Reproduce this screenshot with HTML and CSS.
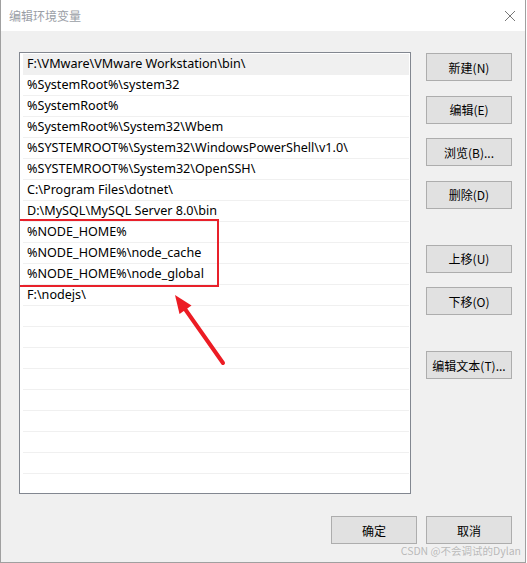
FILE: index.html
```html
<!DOCTYPE html>
<html lang="zh-CN">
<head>
<meta charset="utf-8">
<title>编辑环境变量</title>
<link rel="stylesheet" href="styles.css">
</head>
<body>
<div class="window">
  <div class="titlebar">
    <span class="title">编辑环境变量</span>
    <svg class="close" width="12" height="12" viewBox="0 0 12 12"><path d="M1 1 L11 11 M11 1 L1 11" stroke="#777" stroke-width="1" fill="none"/></svg>
  </div>
  <div class="content">
    <div class="main">
      <div class="listbox">
        <div class="row selected">F:\VMware\VMware Workstation\bin\</div>
        <div class="row">%SystemRoot%\system32</div>
        <div class="row">%SystemRoot%</div>
        <div class="row">%SystemRoot%\System32\Wbem</div>
        <div class="row">%SYSTEMROOT%\System32\WindowsPowerShell\v1.0\</div>
        <div class="row">%SYSTEMROOT%\System32\OpenSSH\</div>
        <div class="row">C:\Program Files\dotnet\</div>
        <div class="row">D:\MySQL\MySQL Server 8.0\bin</div>
        <div class="row">%NODE_HOME%</div>
        <div class="row">%NODE_HOME%\node_cache</div>
        <div class="row">%NODE_HOME%\node_global</div>
        <div class="row">F:\nodejs\</div>
        <div class="row"></div>
        <div class="row"></div>
        <div class="row"></div>
        <div class="row"></div>
        <div class="row"></div>
        <div class="row"></div>
        <div class="row"></div>
        <div class="row"></div>
        <div class="row"></div>
        <div class="highlight"></div>
      </div>
      <div class="side">
        <button class="btn">新建(N)</button>
        <button class="btn">编辑(E)</button>
        <button class="btn">浏览(B)...</button>
        <button class="btn">删除(D)</button>
        <button class="btn far">上移(U)</button>
        <button class="btn">下移(O)</button>
        <button class="btn far">编辑文本(T)...</button>
      </div>
    </div>
    <div class="footer">
      <button class="btn">确定</button>
      <button class="btn">取消</button>
    </div>
  </div>
  <svg class="arrow" width="60" height="80" viewBox="0 0 60 80">
    <line x1="53" y1="73" x2="15" y2="19" stroke="#ec1c24" stroke-width="4" stroke-linecap="round"/>
    <polygon points="5,5 21.5,15.5 9.5,24" fill="#ec1c24"/>
  </svg>
  <div class="watermark">CSDN @不会调试的Dylan</div>
</div>
</body>
</html>
```
FILE: styles.css
```css
* { box-sizing: border-box; }
html, body { margin: 0; padding: 0; background: #ffffff; }
body {
  font-family: "Noto Sans", "Noto Sans CJK SC", sans-serif;
  font-size: 12px;
  color: #000;
}
.window {
  position: relative;
  width: 526px;
  height: 563px;
  background: #f0f0f0;
  border-left: 1px solid #a0a0a0;
  border-right: 1px solid #a0a0a0;
  border-bottom: 1px solid #a0a0a0;
}
.titlebar {
  height: 31px;
  background: #ffffff;
  display: flex;
  align-items: center;
  justify-content: space-between;
  padding: 0 8px 0 8px;
}
.title {
  font-family: "Noto Sans CJK SC", sans-serif;
  font-size: 12px;
  color: #9a9ea6;
}
.close { margin-right: 1px; }
.content {
  padding: 21px 13px 0 18px;
}
.main {
  display: flex;
  gap: 15px;
}
.listbox {
  position: relative;
  width: 392px;
  height: 442px;
  background: #ffffff;
  border: 1px solid #828790;
  padding: 1px 1px 0 3px;
  overflow: hidden;
}
.row {
  height: 21px;
  line-height: 20px;
  border-bottom: 1px solid #f0f0f0;
  padding-left: 4px;
  white-space: nowrap;
  font-size: 12.6px;
}
.row.selected { background: #f0f0f0; }
.highlight {
  position: absolute;
  left: -2px;
  top: 166px;
  width: 201px;
  height: 68px;
  border: 2px solid #e8202a;
}
.side {
  display: flex;
  flex-direction: column;
  gap: 14.6px;
  padding-top: 1px;
}
.btn {
  width: 86px;
  height: 28px;
  background: #e1e1e1;
  border: 1px solid #adadad;
  font-family: "Noto Sans CJK SC", sans-serif;
  font-size: 12px;
  color: #000;
  padding: 0;
  margin: 0;
}
.side .far { margin-top: 21.4px; }
.footer {
  display: flex;
  justify-content: flex-end;
  gap: 9px;
  margin-top: 22px;
}
.arrow {
  position: absolute;
  left: 169px;
  top: 290px;
}
.watermark {
  position: absolute;
  right: 4px;
  bottom: 4px;
  font-family: "Noto Sans CJK SC", sans-serif;
  font-size: 10.5px;
  color: rgba(160, 160, 160, 0.7);
}
```
